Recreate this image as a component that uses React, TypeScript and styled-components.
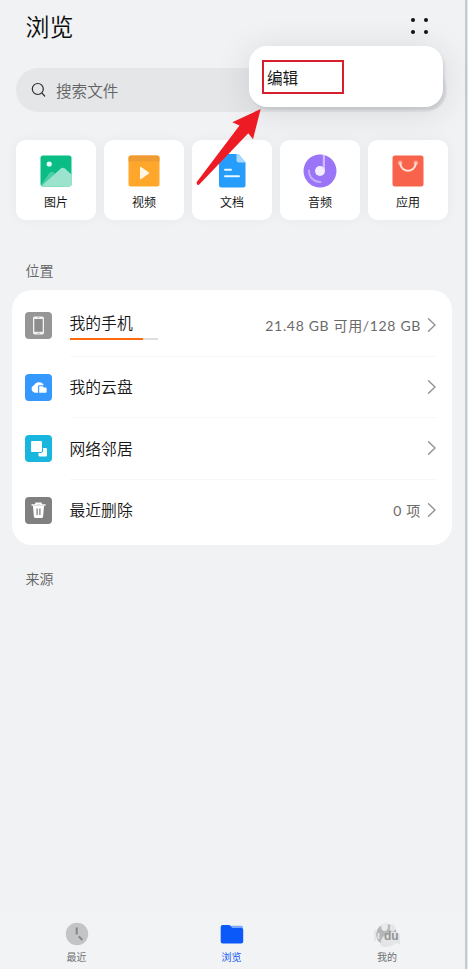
import React from "react";
import styled, { createGlobalStyle } from "styled-components";

const GlobalStyle = createGlobalStyle`
  * { box-sizing: border-box; }
  body {
    margin: 0;
    background: #f1f2f4;
    font-family: "Noto Sans CJK SC", sans-serif;
    font-weight: 350;
    color: #161616;
  }
`;

const Screen = styled.div`
  position: relative;
  width: 468px;
  height: 969px;
  display: flex;
  flex-direction: column;
  overflow: hidden;
  background: #f1f2f4;
  border-right: 1px solid #e3e6e9;
  box-shadow: inset -2px 0 0 #c6c9cd;
`;

const Header = styled.header`
  height: 68px;
  padding: 8px 40px 0 25.5px;
  display: flex;
  justify-content: space-between;
  align-items: flex-start;
`;

const Title = styled.h1`
  margin: 0;
  font-size: 24px;
  line-height: 36px;
  font-weight: 350;
  color: #0b0b0c;
`;

const MenuDots = styled.div`
  display: grid;
  grid-template-columns: 4px 4px;
  gap: 8px 9px;
  margin: 10px -1px 0 0;
`;

const Dot = styled.span`
  width: 4px;
  height: 4px;
  border-radius: 50%;
  background: #111;
`;

const SearchBar = styled.div`
  height: 44px;
  margin: 0 20px 0 16px;
  padding: 0 0 1px 15px;
  border-radius: 22px;
  background: #e5e6e8;
  display: flex;
  align-items: center;
  gap: 10px;
  font-size: 15.6px;
  color: #626365;
`;

const Categories = styled.div`
  display: grid;
  grid-template-columns: repeat(5, 80px);
  justify-content: space-between;
  margin: 28px 19px 0 16px;
`;

const Category = styled.div`
  height: 80px;
  padding-top: 12px;
  border-radius: 9px;
  background: #fff;
  box-shadow: 0 0 13px rgba(0, 0, 0, 0.045);
  display: flex;
  flex-direction: column;
  align-items: center;
`;

const CategoryLabel = styled.span`
  margin-top: 4px;
  font-size: 12px;
  line-height: 16px;
  font-weight: 400;
`;

const SectionTitle = styled.h2<{ $top: number }>`
  margin: ${(p) => p.$top}px 0 0 25.5px;
  font-size: 14px;
  line-height: 20px;
  font-weight: 350;
  color: #626365;
`;

const Card = styled.section`
  height: 255px;
  margin: 10px 15px 0 12px;
  padding: 5px 15px 3px 13px;
  border-radius: 20px;
  background: #fff;
`;

const Row = styled.div`
  height: 61.5px;
  display: flex;
  align-items: center;
  gap: 17.5px;
`;

const RowBody = styled.div<{ $line: boolean }>`
  flex: 1;
  height: 100%;
  display: flex;
  align-items: center;
  justify-content: space-between;
  border-bottom: 1px solid ${(p) => (p.$line ? "#f8f8f9" : "transparent")};
`;

const RowName = styled.div`
  display: flex;
  flex-direction: column;
  gap: 4px;
  font-size: 15.8px;
  line-height: 23px;
`;

const Usage = styled.div`
  width: 88px;
  height: 2px;
  background: #dedede;
`;

const UsageFill = styled.div`
  width: 84%;
  height: 100%;
  background: #ff6a0d;
`;

const RowEnd = styled.div<{ $spacing: number }>`
  display: flex;
  align-items: center;
  gap: 6px;
  font-size: 14px;
  color: #6a6a6a;
  font-family: Lato, "Noto Sans CJK SC", sans-serif;
  font-weight: 400;
  letter-spacing: ${(p) => p.$spacing}px;
`;

const TabBar = styled.nav`
  height: 59px;
  margin: auto 4px 0 0;
  padding: 10px 0 0 0;
  display: grid;
  grid-template-columns: 153px 157px 154px;
  background: #f2f3f5;
  border-top: 1px solid #eff0f2;
`;

const Tab = styled.div<{ $active?: boolean }>`
  display: flex;
  flex-direction: column;
  align-items: center;
  gap: 2px;
  font-size: 10px;
  line-height: 15px;
  font-weight: 400;
  color: ${(p) => (p.$active ? "#1458f5" : "#6e6f71")};
`;

const Popup = styled.div`
  position: absolute;
  left: 249px;
  top: 46px;
  width: 194px;
  height: 61px;
  padding: 14px 13px;
  border-radius: 18px;
  background: #fff;
  box-shadow: 2px 3px 2px rgba(60, 65, 75, 0.1), 0 4px 34px rgba(30, 35, 50, 0.13);
`;

const Highlight = styled.div`
  width: 82px;
  height: 34px;
  padding-left: 3px;
  border: 2px solid #d6202c;
  font-size: 15.6px;
  line-height: 30px;
  font-weight: 400;
`;

const Arrow = styled.svg`
  position: absolute;
  left: 190px;
  top: 104px;
`;

const SearchIcon = () => (
  <svg width="15" height="16" viewBox="0 0 15 16" fill="none" stroke="#2c2c2e" strokeWidth="1.2" strokeLinecap="round">
    <circle cx="6.8" cy="7" r="5.5" />
    <path d="M11 11.2 13.6 14" />
  </svg>
);

const PictureIcon = () => (
  <svg width="40" height="38" viewBox="0 0 40 38">
    <defs>
      <clipPath id="picture"><rect x="4.5" y="3.5" width="31" height="31" rx="2.5" /></clipPath>
    </defs>
    <g clipPath="url(#picture)">
      <path d="M4 3h32v32H4z" fill="#0abd84" />
      <path d="M4 34.5 13.4 21q2.6-2.6 5 0l10 14z" fill="#4bcda5" />
      <path d="M4 35.5 24.8 16.6q2.2-1.8 4.2 0L36 23v12z" fill="#9be3cd" />
    </g>
    <circle cx="13.2" cy="12" r="2.6" fill="#e6fff6" />
  </svg>
);

const VideoIcon = () => (
  <svg width="40" height="38" viewBox="0 0 40 38">
    <rect x="4.5" y="3.5" width="31" height="31" rx="2.5" fill="#ffa72b" />
    <path d="M7 3.5h26a2.5 2.5 0 0 1 2.500 2.500v3.500h-31V6A2.500 2.500 0 0 1 7 3.500z" fill="#ef9b34" />
    <path d="M16 15.500q0-1.300 1.200-.5l7.500 5.300q1 .7 0 1.400l-7.500 5.300q-1.200.8-1.200-.5z" fill="#fff6e4" />
  </svg>
);

const DocumentIcon = () => (
  <svg width="40" height="38" viewBox="0 0 40 38">
    <path d="M9.500 2h16.800l7.200 8.500v22.500q0 2.500-2.500 2.500H9.500Q7 35.500 7 33V4.500Q7 2 9.500 2z" fill="#279dfb" />
    <path d="M24.500 2h1.800l7.200 8.500h-6.800q-2.200 0-2.200-2.200z" fill="#a8d8ff" />
    <path d="M13 17.700h6M13 24.300h14" stroke="#e9f7ff" strokeWidth="2" strokeLinecap="round" />
  </svg>
);

const AudioIcon = () => (
  <svg width="40" height="38" viewBox="0 0 40 38">
    <circle cx="20" cy="19" r="16.500" fill="#9b75f7" />
    <path d="M9 18.500A11 11 0 0 0 20.500 30" fill="none" stroke="#c5adff" strokeWidth="2" strokeLinecap="round" />
    <path d="M22.700 3h2.300v16h-2.300z" fill="#cdb9ff" />
    <circle cx="20" cy="19" r="5" fill="#f3edff" />
  </svg>
);

const AppIcon = () => (
  <svg width="40" height="38" viewBox="0 0 40 38">
    <rect x="4.500" y="3.500" width="31" height="31" rx="2.500" fill="#f8634b" />
    <circle cx="12.200" cy="10.800" r="2.400" fill="#fba18f" />
    <circle cx="27.800" cy="10.800" r="2.400" fill="#fba18f" />
    <path d="M12.200 11.500c1.400 9.600 14.200 9.600 15.600 0" fill="none" stroke="#ffe1d8" strokeWidth="2" strokeLinecap="round" />
  </svg>
);

const PhoneIcon = () => (
  <svg width="27" height="27" viewBox="0 0 27 27">
    <rect width="27" height="27" rx="4" fill="#969696" />
    <rect x="8" y="4.500" width="11" height="18" rx="1.800" fill="#f3f3f3" />
    <path d="M9.300 7h8.400v12.800H9.300z" fill="#8d8d8d" />
    <path d="M12.300 21.200h2.400M12.700 5.800h1.600" stroke="#999" strokeWidth=".7" />
  </svg>
);

const CloudIcon = () => (
  <svg width="27" height="27" viewBox="0 0 27 27">
    <rect width="27" height="27" rx="4" fill="#3598fc" />
    <path d="M10 18.800a4 4 0 0 1-1-7.600A5.600 5.600 0 0 1 17.600 9.500q.8.800 1 1.700H14q-.9 0-.9.900v6.700z" fill="#fff" />
    <path d="M14.200 12.300h3.600l1 1.200h2q.8 0 .8.800v3.700q0 .800-.8.800h-6.600z" fill="#fff" />
  </svg>
);

const NetworkIcon = () => (
  <svg width="27" height="27" viewBox="0 0 27 27">
    <rect width="27" height="27" rx="4" fill="#18b6df" />
    <rect x="13.500" y="13" width="8.500" height="8.500" rx="1.300" fill="#fff" />
    <rect x="5.500" y="5.500" width="12" height="12" rx="1.500" fill="#fff" stroke="#18b6df" strokeWidth="1" />
  </svg>
);

const TrashIcon = () => (
  <svg width="27" height="27" viewBox="0 0 27 27">
    <rect width="27" height="27" rx="4" fill="#808080" />
    <path d="M6.500 8h14M11 7.500V6.300h5v1.200" fill="none" stroke="#fff" strokeWidth="1.500" />
    <path d="M8 9h11l-.9 10.500q-.1 1.500-1.600 1.500h-6q-1.500 0-1.600-1.500z" fill="#fff" />
    <path d="M12.100 11.500v6.500M14.900 11.500v6.500" stroke="#858585" strokeWidth="1.300" />
  </svg>
);

const Chevron = () => (
  <svg width="10" height="16" viewBox="0 0 10 16" fill="none" stroke="#929292" strokeWidth="1.400" strokeLinecap="round" strokeLinejoin="round">
    <path d="M1.500 1.700 8 8l-6.500 6.300" />
  </svg>
);

const ClockIcon = () => (
  <svg width="26" height="26" viewBox="0 0 26 26">
    <circle cx="13" cy="13" r="11.200" fill="#c3c4c5" />
    <path d="M12.700 6.500v7M14.800 15.400l3.600 3.600" fill="none" stroke="#858687" strokeWidth="2" />
  </svg>
);

const FolderIcon = () => (
  <svg width="26" height="26" viewBox="0 0 26 26">
    <path d="M12 4.800h10.500q1.300 0 1.300 1.400V9H12z" fill="#7aa8ff" />
    <path d="M3.700 4h6.200q.8 0 1.300.6l1.600 1.800q.4.500 1.200.500h8.500q1.700 0 1.700 1.700v11.800q0 2-2 2H3.700q-2 0-2-2V6q0-2 2-2z" fill="#0b59f8" />
  </svg>
);

const ProfileIcon = () => (
  <svg width="30" height="26" viewBox="0 0 30 26">
    <circle cx="14.500" cy="13.500" r="10.500" fill="#b5b6b7" />
    <ellipse cx="12.500" cy="6" rx="3.200" ry="4" fill="#e9eaeb" />
    <path d="M15 1v6.500" stroke="#e9eaeb" strokeWidth="1.400" />
    <ellipse cx="20.500" cy="7" rx="2.800" ry="3.400" fill="#e4e5e6" />
    <path d="M9 25q-1.500-6 3-10 5-5 11-4l5 2v10q-4-1-6 .5-6 4-13 1.500z" fill="#e4e5e6" />
    <path d="M3 9v11M6.500 12v6" stroke="#e4e5e6" strokeWidth="1.800" />
    <text x="12" y="19" fontFamily="Liberation Sans, sans-serif" fontWeight="700" fontSize="12" fill="#929394">du</text>
  </svg>
);

const categories = [
  { label: "图片", Icon: PictureIcon },
  { label: "视频", Icon: VideoIcon },
  { label: "文档", Icon: DocumentIcon },
  { label: "音频", Icon: AudioIcon },
  { label: "应用", Icon: AppIcon },
];

const places = [
  { name: "我的手机", Icon: PhoneIcon, detail: "21.48 GB 可用/128 GB", usage: true, spacing: 0.66 },
  { name: "我的云盘", Icon: CloudIcon },
  { name: "网络邻居", Icon: NetworkIcon },
  { name: "最近删除", Icon: TrashIcon, detail: "0 项", spacing: 0.66 },
];

export default function App() {
  return (
    <>
      <GlobalStyle />
      <Screen>
        <Header>
          <Title>浏览</Title>
          <MenuDots><Dot /><Dot /><Dot /><Dot /></MenuDots>
        </Header>
        <SearchBar><SearchIcon />搜索文件</SearchBar>
        <Categories>
          {categories.map(({ label, Icon }) => (
            <Category key={label}>
              <Icon />
              <CategoryLabel>{label}</CategoryLabel>
            </Category>
          ))}
        </Categories>
        <SectionTitle $top={40}>位置</SectionTitle>
        <Card>
          {places.map(({ name, Icon, detail, usage, spacing }, i) => (
            <Row key={name}>
              <Icon />
              <RowBody $line={i < places.length - 1}>
                <RowName>
                  {name}
                  {usage && <Usage><UsageFill /></Usage>}
                </RowName>
                <RowEnd $spacing={spacing ?? 0}>
                  {detail}
                  <Chevron />
                </RowEnd>
              </RowBody>
            </Row>
          ))}
        </Card>
        <SectionTitle $top={23}>来源</SectionTitle>
        <TabBar>
          <Tab><ClockIcon />最近</Tab>
          <Tab $active><FolderIcon />浏览</Tab>
          <Tab><ProfileIcon />我的</Tab>
        </TabBar>
        <Popup><Highlight>编辑</Highlight></Popup>
        <Arrow width="76" height="86" viewBox="190 104 76 86">
          <path d="M260.700 109 232.300 122.200 239.500 125.500 196.600 182.300Q196.500 185.800 199 184.800L248.300 133.300 253 139.300Z" fill="#ed1c24" />
        </Arrow>
      </Screen>
    </>
  );
}
